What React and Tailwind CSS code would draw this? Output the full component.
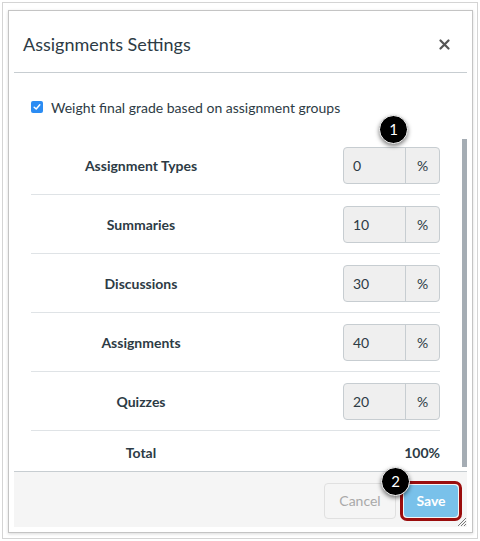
import React from 'react';

const rows = [
  { label: 'Assignment Types', value: '0' },
  { label: 'Summaries', value: '10' },
  { label: 'Discussions', value: '30' },
  { label: 'Assignments', value: '40' },
  { label: 'Quizzes', value: '20' },
];

const Badge = ({ n, className }) => (
  <div
    className={`absolute w-[29px] h-[29px] rounded-full bg-black border border-white text-white text-[15px] flex items-center justify-center shadow-[0_2px_4px_rgba(0,0,0,0.5)] ${className}`}
  >
    {n}
  </div>
);

const App = () => {
  return (
    <div className="w-[480px] h-[541px] bg-white pt-[2px] pl-[2px] font-['Lato','Liberation_Sans',sans-serif] text-[#2d3b45]">
      <div className="w-[476px] h-[537px] border border-[#d4d4d4] pt-[7px] pl-[5px]">
        {/* Dialog */}
        <div className="relative w-[465px] h-[523px] border border-[#c4c4c4] bg-white p-[5px] shadow-[0_1px_3px_rgba(0,0,0,0.15)] flex flex-col">
          {/* Header */}
          <div className="h-[57px] shrink-0 border-b border-[#c7cdd1] flex items-center justify-between pl-[9px] pr-[17px]">
            <h2 className="text-[18px] leading-none">Assignments Settings</h2>
            <svg width="11" height="11" viewBox="0 0 11 11" className="text-[#555]">
              <path d="M1.5 1.5 L9.5 9.5 M9.5 1.5 L1.5 9.5" stroke="currentColor" strokeWidth="2.2" strokeLinecap="round" />
            </svg>
          </div>

          {/* Body */}
          <div className="flex-1 min-h-0 flex overflow-hidden">
            <div className="flex-1 pl-[17px] pr-[22px] pt-[24px]">
              <label className="flex items-center h-[20px] text-[14px]">
                <span className="w-[12px] h-[12px] rounded-[2px] bg-[#2b8cf3] flex items-center justify-center mr-[8px]">
                  <svg width="8" height="8" viewBox="0 0 8 8">
                    <path d="M1.2 4.2 L3.2 6 L6.8 1.8" fill="none" stroke="white" strokeWidth="1.5" strokeLinecap="round" strokeLinejoin="round" />
                  </svg>
                </span>
                Weight final grade based on assignment groups
              </label>

              <div className="mt-[19px]">
                {rows.map((row) => (
                  <div key={row.label} className="h-[59px] border-b border-[#dfe3e6] flex items-center">
                    <div className="w-[220px] text-center font-bold text-[14px]">{row.label}</div>
                    <div className="flex-1 flex justify-end">
                      <div className="flex h-[37px] border border-[#c7cdd1] rounded-[4px] bg-[#efefef] text-[14px]">
                        <div className="w-[62px] flex items-center pl-[9px] border-r border-[#c7cdd1]">{row.value}</div>
                        <div className="w-[33px] flex items-center justify-center">%</div>
                      </div>
                    </div>
                  </div>
                ))}
                <div className="h-[40px] pt-[2px] flex items-center font-bold text-[14px]">
                  <div className="w-[220px] text-center">Total</div>
                  <div className="flex-1 text-right">100%</div>
                </div>
              </div>
            </div>
            {/* Scrollbar */}
            <div className="w-[5px] pt-[66px] pb-[4px] flex">
              <div className="w-[5px] flex-1 bg-[#a5adb4]" />
            </div>
          </div>

          {/* Footer */}
          <div className="h-[56px] shrink-0 border-t border-[#c7cdd1] bg-[#f5f5f5] flex items-center justify-end pr-[5px] gap-[4px]">
            <button className="w-[72px] h-[36px] mt-[2px] rounded-[4px] border border-[#e0e0e0] bg-[#f5f5f5] text-[#a9a9a9] text-[14px]">
              Cancel
            </button>
            <div className="rounded-[7px] border-[3px] border-[#9b0d0d] p-[1px] mt-[2px]">
              <button className="w-[54px] h-[32px] rounded-[4px] bg-[#79c1ea] text-white font-bold text-[14px]">
                Save
              </button>
            </div>
          </div>

          {/* Resize grip */}
          <svg className="absolute right-[5px] bottom-[5px]" width="11" height="11" viewBox="0 0 11 11">
            <path d="M10 2 L2 10 M10 5 L5 10 M10 8 L8 10" stroke="#777" strokeWidth="1" />
          </svg>

          <Badge n="1" className="left-[370px] top-[104px]" />
          <Badge n="2" className="left-[372px] top-[456px]" />
        </div>
      </div>
    </div>
  );
};

export default App;
